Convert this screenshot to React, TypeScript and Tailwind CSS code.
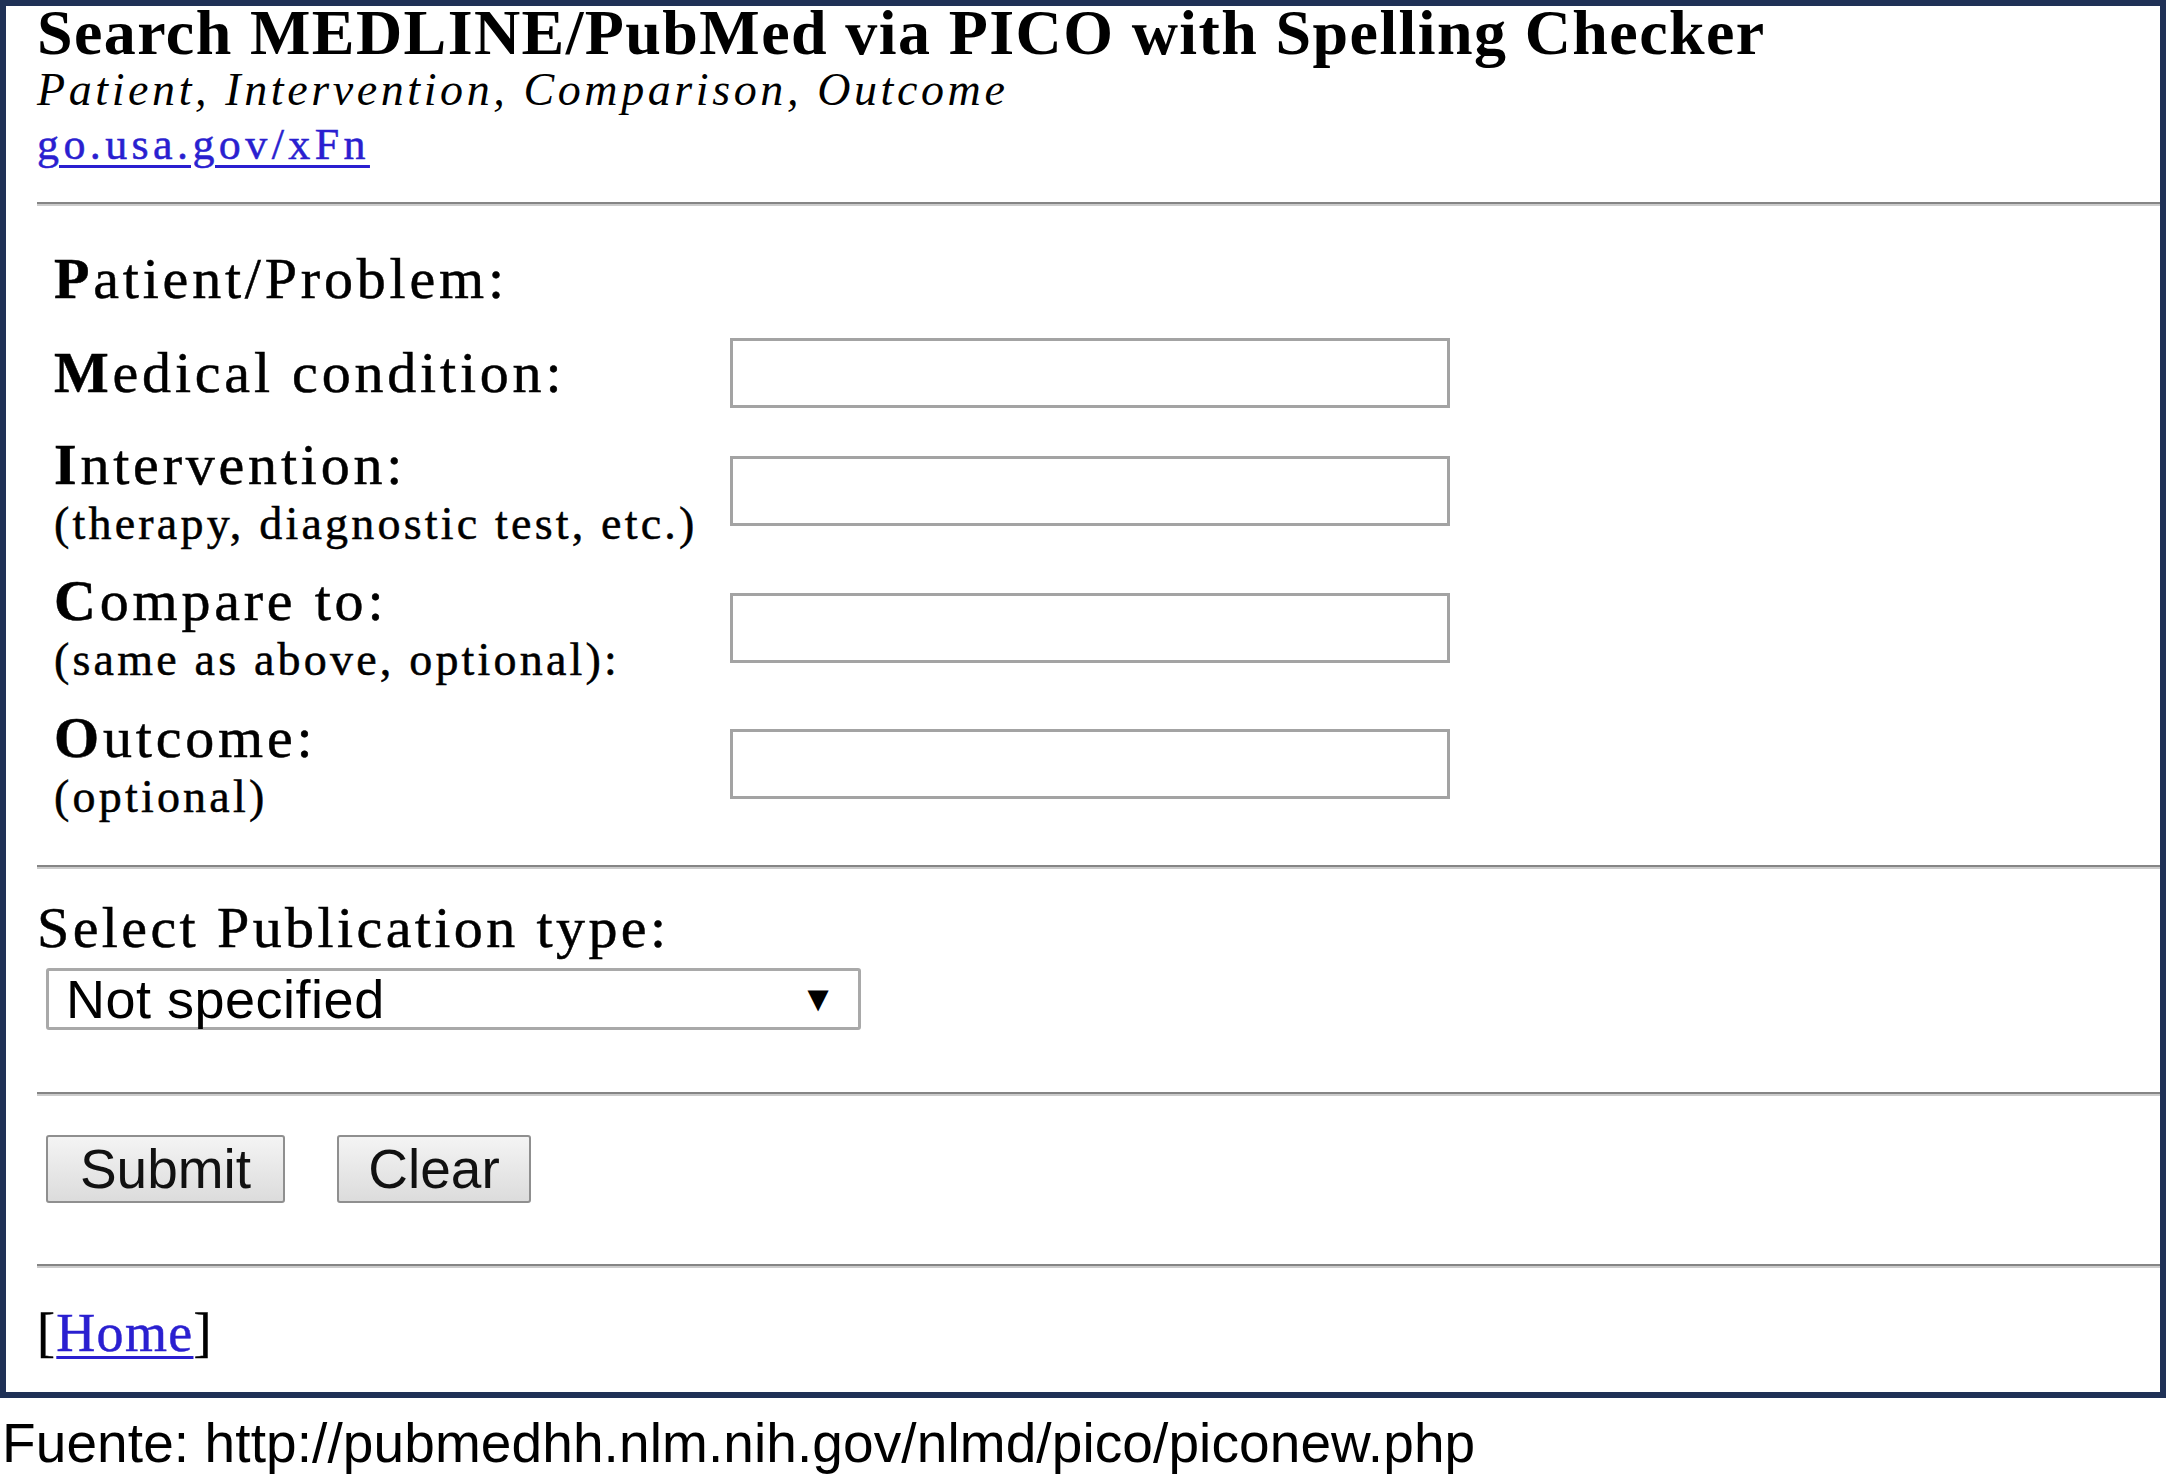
import React from "react";

const serifBase = "font-['Liberation_Serif','Times_New_Roman',serif]";
const serif = `${serifBase} [-webkit-text-stroke:0.5px_currentColor]`;
const sans = "font-['Liberation_Sans',Arial,sans-serif]";

function Hr({ mt }: { mt: string }) {
  return <div className={`${mt} h-[4px] border-t-[2px] border-b-[2px] border-t-[#858585] border-b-[#cccccc]`} />;
}

function TextInput() {
  return <div className="h-[70px] w-[720px] border-[3px] border-[#a3a3a3] bg-white" />;
}

function Label({ first, rest }: { first: string; rest: string }) {
  return (
    <div className={`h-[58px] text-[58px] leading-[58px] tracking-[3.8px] whitespace-nowrap text-black ${serif}`}>
      <b>{first}</b>
      {rest}
    </div>
  );
}

function Sub({ children }: { children: React.ReactNode }) {
  return (
    <div className={`h-[60px] text-[46px] leading-[60px] tracking-[3.2px] whitespace-nowrap text-black ${serif}`}>{children}</div>
  );
}

export default function App() {
  return (
    <div className="min-h-screen w-full bg-white">
      <div className="box-border h-[1398px] w-[2166px] border-[6px] border-[#1f3156] bg-white">
        <div className="pl-[31px] pt-[2px]">
          <div className={`h-[50px] text-[64px] leading-[50px] font-bold tracking-[1.4px] whitespace-nowrap text-black ${serifBase}`}>
            Search MEDLINE/PubMed via PICO with Spelling Checker
          </div>
          <div className={`mt-[10px] h-[44px] text-[46px] leading-[44px] italic tracking-[3.6px] whitespace-nowrap text-black ${serifBase}`}>
            Patient, Intervention, Comparison, Outcome
          </div>
          <div className={`mt-[13px] h-[40px] text-[44px] leading-[40px] tracking-[4.4px] whitespace-nowrap ${serif}`}>
            <a className="text-[#2a1fd0] underline decoration-[3px] underline-offset-[6px]">go.usa.gov/xFn</a>
          </div>

          <Hr mt="mt-[37px]" />

          <div className="pl-[17px]">
            <div className="mt-[44px]">
              <Label first="P" rest="atient/Problem:" />
            </div>

            <div className="mt-[30px] flex">
              <div className="w-[676px] pt-[6px]">
                <Label first="M" rest="edical condition:" />
              </div>
              <TextInput />
            </div>

            <div className="mt-[28px] flex">
              <div className="w-[676px]">
                <Label first="I" rest="ntervention:" />
                <Sub>(therapy, diagnostic test, etc.)</Sub>
              </div>
              <div className="pt-[20px]">
                <TextInput />
              </div>
            </div>

            <div className="mt-[18px] flex">
              <div className="w-[676px]">
                <Label first="C" rest="ompare to:" />
                <Sub>(same as above, optional):</Sub>
              </div>
              <div className="pt-[21px]">
                <TextInput />
              </div>
            </div>

            <div className="mt-[19px] flex">
              <div className="w-[676px]">
                <Label first="O" rest="utcome:" />
                <Sub>(optional)</Sub>
              </div>
              <div className="pt-[20px]">
                <TextInput />
              </div>
            </div>
          </div>

          <Hr mt="mt-[38px]" />

          <div className={`mt-[30px] h-[58px] text-[58px] leading-[58px] tracking-[3.4px] whitespace-nowrap text-black ${serif}`}>
            Select Publication type:
          </div>

          <div className="ml-[9px] mt-[11px] flex h-[62px] w-[815px] items-center justify-between rounded-[3px] border-[3px] border-[#a9a9a9] bg-white pl-[17px] pr-[22px]">
            <span className={`text-[54px] leading-none tracking-[0.5px] text-black ${sans}`}>Not specified</span>
            <span className={`text-[36px] leading-none text-black ${sans}`}>▼</span>
          </div>

          <Hr mt="mt-[62px]" />

          <div className="ml-[9px] mt-[39px] flex gap-[52px]">
            <button className={`h-[68px] w-[239px] rounded-[3px] border-[2px] border-[#8f8f8f] bg-gradient-to-b from-[#f4f4f4] to-[#dcdcdc] text-[55px] leading-none text-[#111] ${sans}`}>
              Submit
            </button>
            <button className={`h-[68px] w-[194px] rounded-[3px] border-[2px] border-[#8f8f8f] bg-gradient-to-b from-[#f4f4f4] to-[#dcdcdc] text-[55px] leading-none text-[#111] ${sans}`}>
              Clear
            </button>
          </div>

          <Hr mt="mt-[61px]" />

          <div className={`mt-[38px] h-[54px] text-[54px] leading-[54px] tracking-[1.3px] whitespace-nowrap text-black ${serif}`}>
            [<a className="text-[#2a1fd0] underline decoration-[3px] underline-offset-[5px]">Home</a>]
          </div>
        </div>
      </div>
      <div className={`mt-[15px] h-[60px] pl-[2px] text-[55px] leading-[60px] tracking-[0.1px] whitespace-nowrap text-black ${sans}`}>
        Fuente: http://pubmedhh.nlm.nih.gov/nlmd/pico/piconew.php
      </div>
    </div>
  );
}
